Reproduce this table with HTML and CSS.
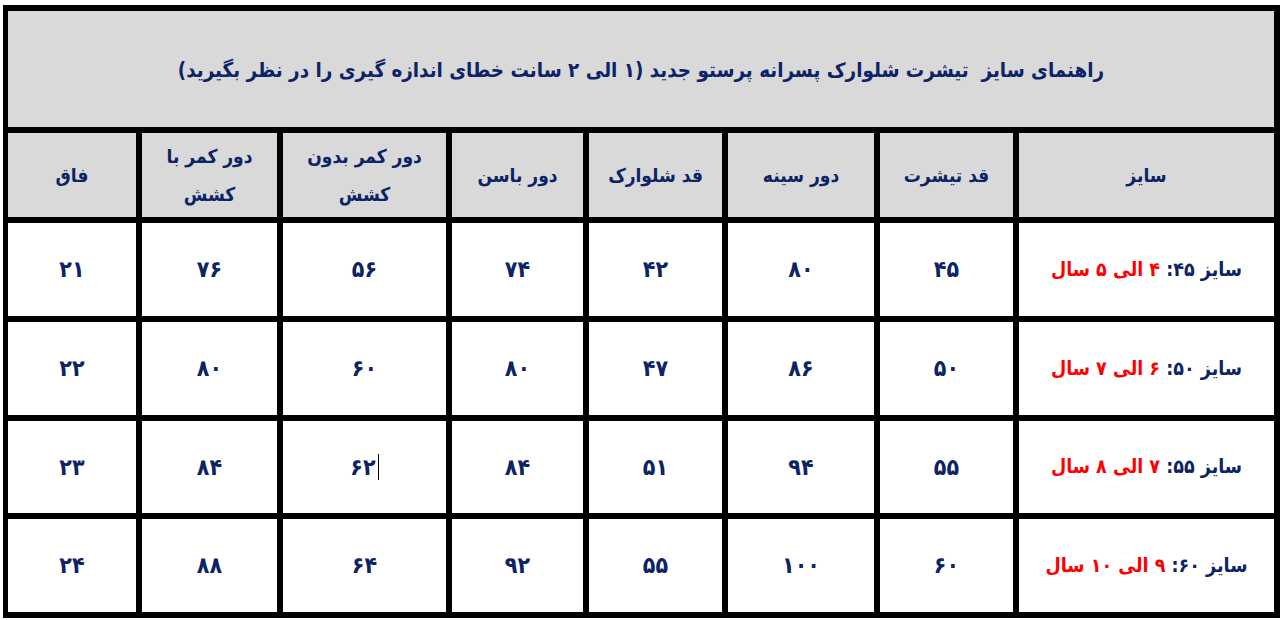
FILE: index.html
```html
<!DOCTYPE html>
<html lang="fa" dir="rtl">
<head>
<meta charset="utf-8">
<title>راهنمای سایز</title>
<link rel="stylesheet" href="styles.css">
</head>
<body>
<div class="chart">
  <div class="cell title">راهنمای سایز&nbsp; تیشرت شلوارک پسرانه پرستو جدید (۱ الی ۲ سانت خطای اندازه گیری را در نظر بگیرید)</div>

  <div class="cell head">سایز</div>
  <div class="cell head">قد تیشرت</div>
  <div class="cell head">دور سینه</div>
  <div class="cell head">قد شلوارک</div>
  <div class="cell head">دور باسن</div>
  <div class="cell head">دور کمر بدون<br>کشش</div>
  <div class="cell head">دور کمر با<br>کشش</div>
  <div class="cell head">فاق</div>

  <div class="cell size">سایز ۴۵:&nbsp;<span class="age">۴ الی ۵ سال</span></div>
  <div class="cell num">۴۵</div>
  <div class="cell num">۸۰</div>
  <div class="cell num">۴۲</div>
  <div class="cell num">۷۴</div>
  <div class="cell num">۵۶</div>
  <div class="cell num">۷۶</div>
  <div class="cell num">۲۱</div>

  <div class="cell size">سایز ۵۰:&nbsp;<span class="age">۶ الی ۷ سال</span></div>
  <div class="cell num">۵۰</div>
  <div class="cell num">۸۶</div>
  <div class="cell num">۴۷</div>
  <div class="cell num">۸۰</div>
  <div class="cell num">۶۰</div>
  <div class="cell num">۸۰</div>
  <div class="cell num">۲۲</div>

  <div class="cell size">سایز ۵۵:&nbsp;<span class="age">۷ الی ۸ سال</span></div>
  <div class="cell num">۵۵</div>
  <div class="cell num">۹۴</div>
  <div class="cell num">۵۱</div>
  <div class="cell num">۸۴</div>
  <div class="cell num"><span class="ltr">۶۲<span class="caret"></span></span></div>
  <div class="cell num">۸۴</div>
  <div class="cell num">۲۳</div>

  <div class="cell size">سایز ۶۰:&nbsp;<span class="age">۹ الی ۱۰ سال</span></div>
  <div class="cell num">۶۰</div>
  <div class="cell num">۱۰۰</div>
  <div class="cell num">۵۵</div>
  <div class="cell num">۹۲</div>
  <div class="cell num">۶۴</div>
  <div class="cell num">۸۸</div>
  <div class="cell num">۲۴</div>
</div>
</body>
</html>
```
FILE: styles.css
```css
html, body {
  margin: 0;
  padding: 0;
  background: #ffffff;
}

body {
  font-family: "DejaVu Sans Condensed", "DejaVu Sans", sans-serif;
  font-weight: bold;
  color: #0c2366;
}

.chart {
  direction: rtl;
  margin-top: 5px;
  width: 1277px;
  box-sizing: border-box;
  padding: 6px 6px 6px 5px;
  background: #000000;
  display: grid;
  grid-template-columns: 255px 133px 146px 133px 131px 163px 135px 128px;
  grid-template-rows: 116px 84px 93px 93px 92px 93px;
  gap: 6px;
}

.cell {
  display: flex;
  align-items: center;
  justify-content: center;
  text-align: center;
  background: #ffffff;
  line-height: 1.4;
}

.title {
  grid-column: 1 / -1;
  background: #d9d9d9;
  font-size: 20.4px;
  padding-top: 2px;
}

.head {
  background: #d9d9d9;
  font-size: 19px;
  line-height: 2;
}

.num {
  font-size: 23px;
}

.size {
  font-size: 19.5px;
}

.age {
  color: #ff0000;
}

.ltr {
  direction: ltr;
  display: inline-flex;
  align-items: center;
}

.caret {
  display: inline-block;
  width: 1px;
  height: 26px;
  background: #000000;
  margin-left: 2px;
}
```
